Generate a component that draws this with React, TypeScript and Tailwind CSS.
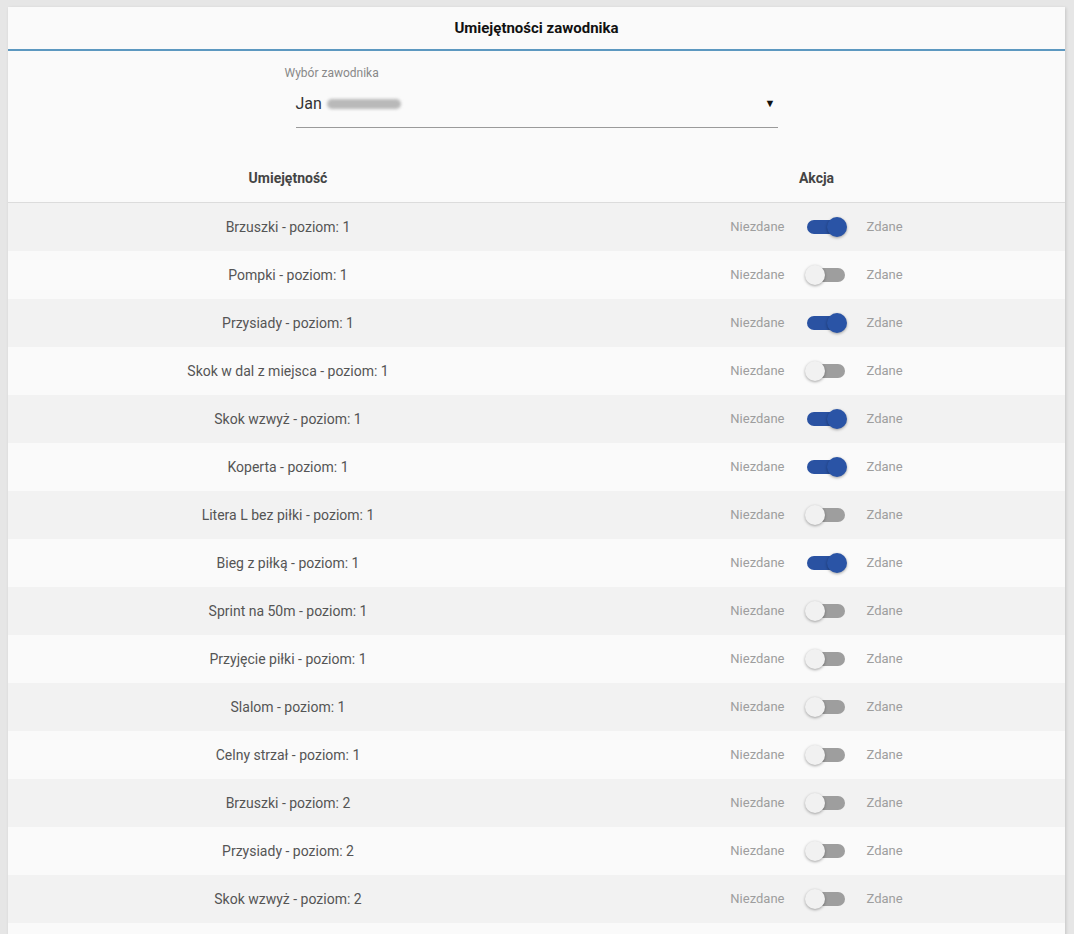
import React from "react";

const rows: [string, boolean][] = [
  ["Brzuszki - poziom: 1", true],
  ["Pompki - poziom: 1", false],
  ["Przysiady - poziom: 1", true],
  ["Skok w dal z miejsca - poziom: 1", false],
  ["Skok wzwyż - poziom: 1", true],
  ["Koperta - poziom: 1", true],
  ["Litera L bez piłki - poziom: 1", false],
  ["Bieg z piłką - poziom: 1", true],
  ["Sprint na 50m - poziom: 1", false],
  ["Przyjęcie piłki - poziom: 1", false],
  ["Slalom - poziom: 1", false],
  ["Celny strzał - poziom: 1", false],
  ["Brzuszki - poziom: 2", false],
  ["Przysiady - poziom: 2", false],
  ["Skok wzwyż - poziom: 2", false],
  ["Koperta - poziom: 2", false],
  ["Slalom - poziom: 2", false],
];

function Toggle({ on }: { on: boolean }) {
  return (
    <div className="relative w-[42px] h-[20px] shrink-0">
      <div
        className={`absolute left-[2px] right-[2px] top-[3px] h-[14px] rounded-full ${
          on ? "bg-[#2a52a2]" : "bg-[#9e9e9e]"
        }`}
      />
      <div
        className={`absolute top-0 w-[20px] h-[20px] rounded-full shadow-[0_1px_3px_rgba(0,0,0,0.35)] ${
          on ? "left-[22px] bg-[#2a54a6]" : "left-0 bg-[#f1f1f1]"
        }`}
      />
    </div>
  );
}

export default function App() {
  return (
    <div
      className="min-h-screen bg-[#e6e6e6] pt-[7px] pl-[8px] pr-[9px]"
      style={{ fontFamily: "Roboto, 'Liberation Sans', sans-serif" }}
    >
      <div className="bg-[#fafafa] shadow-[1px_1px_3px_rgba(0,0,0,0.15)]">
        <div className="h-[44px] flex items-center justify-center text-[15px] font-bold text-[#111] border-b-2 border-[#5c98c0]">
          Umiejętności zawodnika
        </div>
        <div className="flex justify-center pt-[14px]">
          <div className="w-[504px]">
            <div className="text-[12px] leading-[16px] text-[#888]">Wybór zawodnika</div>
            <div className="mx-[11px] mt-[11px] border-b border-[#9a9a9a] pb-[11px] flex items-center justify-between">
              <div className="flex items-center text-[16px] leading-[24px] text-[#333]">
                <span>Jan</span>
                <span className="ml-[5px] inline-block w-[74px] h-[10px] rounded-full bg-[#b9b9b9] blur-[1.5px]" />
              </div>
              <span className="text-[11px] text-[#111] mr-[2px]">▼</span>
            </div>
          </div>
        </div>
        <div className="mt-[27px] grid grid-cols-[560px_1fr] h-[48px] items-center border-b border-[#dcdcdc] text-[14px] font-bold text-[#444]">
          <div className="text-center">Umiejętność</div>
          <div className="text-center">Akcja</div>
        </div>
        {rows.map(([name, on], i) => (
          <div
            key={i}
            className={`grid grid-cols-[560px_1fr] h-[48px] items-center ${
              i % 2 === 0 ? "bg-[#f2f2f2]" : "bg-[#fafafa]"
            }`}
          >
            <div className="text-center text-[14px] text-[#555]">{name}</div>
            <div className="flex items-center justify-center text-[13px] text-[#9e9e9e]">
              <span>Niezdane</span>
              <div className="mx-[20px]">
                <Toggle on={on} />
              </div>
              <span>Zdane</span>
            </div>
          </div>
        ))}
      </div>
    </div>
  );
}
